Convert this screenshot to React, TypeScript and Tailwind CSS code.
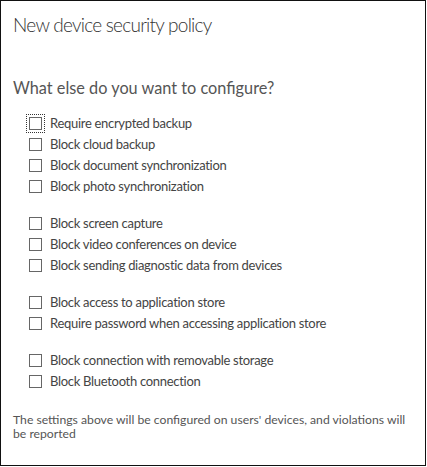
import React from "react";

const GROUPS: string[][] = [
  [
    "Require encrypted backup",
    "Block cloud backup",
    "Block document synchronization",
    "Block photo synchronization",
  ],
  [
    "Block screen capture",
    "Block video conferences on device",
    "Block sending diagnostic data from devices",
  ],
  [
    "Block access to application store",
    "Require password when accessing application store",
  ],
  ["Block connection with removable storage", "Block Bluetooth connection"],
];

function Option({ label, focused }: { label: string; focused?: boolean }) {
  return (
    <label className="flex h-[21px] items-center gap-[8px] pl-[16px]">
      <span
        className={`block h-[13px] w-[13px] shrink-0 border border-[#666] bg-white ${
          focused ? "outline outline-1 outline-dotted outline-offset-[2px] outline-[#333]" : ""
        }`}
      />
      <span className="text-[13px] tracking-[-0.3px] text-[#444] leading-[21px]">{label}</span>
    </label>
  );
}

export default function App() {
  return (
    <div
      className="h-[466px] w-[426px] border border-[#111] bg-white px-[12px]"
      style={{ fontFamily: 'Lato, "Open Sans", sans-serif' }}
    >
      <h1 className="pt-[10px] text-[19px] font-light tracking-[-0.75px] leading-[28px] text-[#333]">
        New device security policy
      </h1>
      <h2 className="mt-[38px] text-[16.3px] font-normal leading-[22px] text-[#555]">
        What else do you want to configure?
      </h2>
      <div className="mt-[14px] flex flex-col gap-4">
        {GROUPS.map((group, gi) => (
          <div key={gi} className="flex flex-col">
            {group.map((label, i) => (
              <Option key={label} label={label} focused={gi === 0 && i === 0} />
            ))}
          </div>
        ))}
      </div>
      <p className="mt-[21px] text-[12.2px] leading-[14px] text-[#555]">
        The settings above will be configured on users' devices, and violations will be reported
      </p>
    </div>
  );
}
